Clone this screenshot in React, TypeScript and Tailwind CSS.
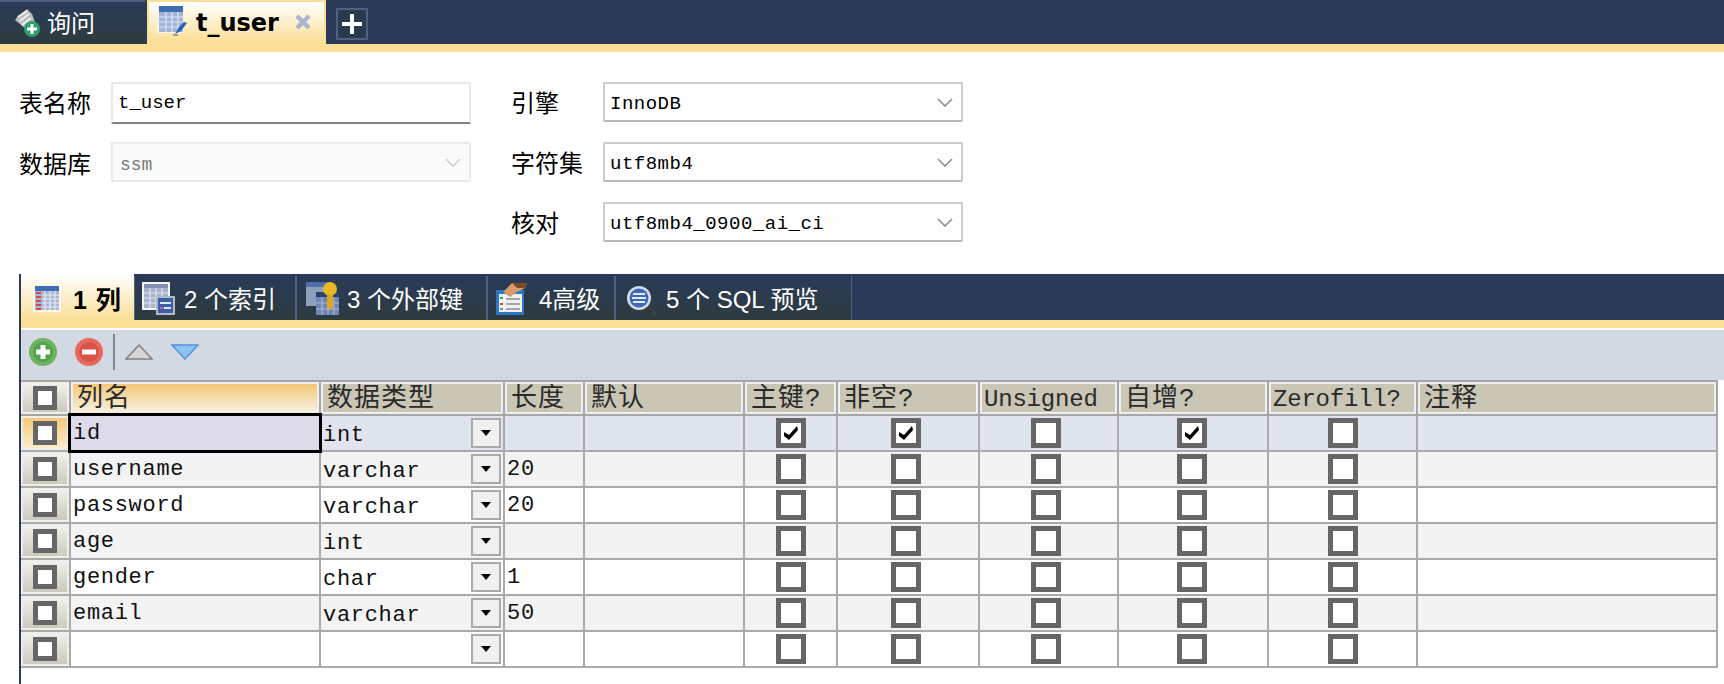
import React from "react";

const cjk = "font-['Liberation_Sans','Noto_Sans_CJK_SC',sans-serif]";
const mono = "font-['Liberation_Mono','Noto_Sans_CJK_SC',monospace]";
const cols = "grid grid-cols-[50px_250px_184px_80px_160px_93px_142px_139px_150px_149px_300px] w-[1697px]";

// small icons, drawn by hand
function QueryIcon() {
  return (
    <svg width="28" height="30" viewBox="0 0 28 30" className="shrink-0">
      <path d="M5 8 L14 1 L19 6 L22 14 L14 22 L8 17 L2 12 Z" fill="#b9bcbc" />
      <path d="M5 9 L14 3 M7 13 L16 6 M9 17 L18 10" stroke="#efefef" strokeWidth="2" />
      <circle cx="19" cy="21" r="8" fill="#2f9e6c" />
      <path d="M19 16 V26 M14 21 H24" stroke="#ffffff" strokeWidth="3" />
    </svg>
  );
}

function TableEditIcon() {
  return (
    <svg width="32" height="32" viewBox="0 0 32 32" className="shrink-0">
      <rect x="0" y="0" width="27" height="27" fill="#f8f5e8" />
      <rect x="2" y="0" width="24" height="6" fill="#3f6db3" />
      <rect x="2" y="6" width="24" height="20" fill="#a3b5d8" />
      <path d="M9 6 V26 M15 6 V26 M21 6 V26 M2 11 H26 M2 16 H26 M2 21 H26" stroke="#dfe5f0" strokeWidth="1.2" />
      <path d="M18 28 L22 21 L27 16 L30 17 L24 25 L18 28 Z" fill="#2c62b0" />
      <rect x="16" y="28" width="5" height="2" fill="#a0a0a0" />
    </svg>
  );
}

function ColumnsIcon() {
  return (
    <svg width="28" height="27" viewBox="0 0 28 27" className="shrink-0">
      <rect width="28" height="27" fill="#fdf8ea" />
      <rect x="2" y="1" width="24" height="5" fill="#3f6db3" />
      <rect x="2" y="6" width="24" height="19" fill="#a9b5d2" />
      <path d="M3 8 H8 M3 12 H8 M3 16 H8 M3 20 H8 M3 24 H8" stroke="#d8453f" strokeWidth="2" />
      <path d="M12 6 V25 M17 6 V25 M22 6 V25 M9 10 H26 M9 14 H26 M9 18 H26 M9 22 H26" stroke="#e8ebf3" strokeWidth="1.2" />
    </svg>
  );
}

function IndexIcon() {
  return (
    <svg width="33" height="33" viewBox="0 0 33 33" className="shrink-0">
      <rect width="28" height="28" fill="#f4f5f7" />
      <rect x="2" y="2" width="24" height="24" fill="#a8b4cc" />
      <rect x="2" y="2" width="24" height="4" fill="#8091b5" />
      <path d="M8 6 V26 M14 6 V26 M20 6 V26 M2 11 H26 M2 16 H26 M2 21 H26" stroke="#dfe4ee" strokeWidth="1.2" />
      <rect x="14" y="14" width="19" height="19" fill="#b4bac4" />
      <rect x="16" y="16" width="15" height="15" fill="#3b5fa8" />
      <rect x="18" y="20" width="11" height="2" fill="#dfe6f5" />
      <rect x="18" y="25" width="3" height="2" fill="#e06080" />
      <rect x="22" y="25" width="7" height="2" fill="#dfe6f5" />
    </svg>
  );
}

function ForeignKeyIcon() {
  return (
    <svg width="33" height="33" viewBox="0 0 33 33" className="shrink-0">
      <rect x="0" y="0" width="24" height="24" fill="#8f9fbe" />
      <rect x="0" y="0" width="24" height="5" fill="#4f6ea8" />
      <rect x="10" y="10" width="23" height="23" fill="#6f86b2" />
      <rect x="10" y="10" width="23" height="5" fill="#24416f" />
      <path d="M16 15 V33 M22 15 V33 M28 15 V33 M10 21 H33 M10 27 H33" stroke="#a6b5d2" strokeWidth="1.2" />
      <circle cx="24" cy="7" r="7" fill="#e9b828" />
      <path d="M21 12 H27 V25 L24 28 L21 25 Z" fill="#dca81e" />
    </svg>
  );
}

function AdvancedIcon() {
  return (
    <svg width="32" height="33" viewBox="0 0 32 33" className="shrink-0">
      <rect x="1" y="8" width="28" height="25" fill="#2c78c4" />
      <rect x="4" y="12" width="23" height="18" fill="#eef1ee" />
      <path d="M5 16 H8" stroke="#2fa84f" strokeWidth="2" />
      <path d="M5 22 H8" stroke="#d0483f" strokeWidth="2" />
      <path d="M5 27 H8" stroke="#7a8aa0" strokeWidth="2" />
      <path d="M11 17 H25 M11 22 H25 M11 27 H25" stroke="#a4a8ac" strokeWidth="2" />
      <path d="M8 10 L17 1 H32 L30 6 L22 10 L15 15 Z" fill="#d89a6a" />
      <path d="M17 1 H32 L30 6 H22 Z" fill="#7d4a28" />
    </svg>
  );
}

function PreviewIcon() {
  return (
    <svg width="32" height="32" viewBox="0 0 32 32" className="shrink-0 mt-[6px]">
      <path d="M20 20 L30 30" stroke="#3a3f44" strokeWidth="3" />
      <circle cx="13" cy="13" r="12" fill="#d8dce6" />
      <circle cx="13" cy="13" r="9.5" fill="#3f69b4" />
      <path d="M7 9 H19 M6 13 H20 M7 17 H19" stroke="#dfe8f8" strokeWidth="2" />
    </svg>
  );
}

function Chevron({ className }: { className: string }) {
  return (
    <svg width="16" height="9" viewBox="0 0 16 9" fill="none" className={className}>
      <path d="M1 1 L8 8 L15 1" stroke="currentColor" strokeWidth="1.5" />
    </svg>
  );
}

function Box({ checked = false, small = false }: { checked?: boolean; small?: boolean }) {
  return (
    <div className={`bg-white border-[5px] border-[#666666] flex items-center justify-center ${small ? "w-[24px] h-[24px]" : "w-[30px] h-[30px]"}`}>
      {checked && (
        <svg width="16" height="14" viewBox="0 0 16 14">
          <path d="M1 6 L6 9 L14 0 L15 4 L6 14 L1 10 Z" fill="#000000" />
        </svg>
      )}
    </div>
  );
}

const headers = [
  { text: "列名", wide: true },
  { text: "数据类型", wide: true },
  { text: "长度", wide: true },
  { text: "默认", wide: true },
  { text: "主键?", wide: true },
  { text: "非空?", wide: true },
  { text: "Unsigned", wide: false },
  { text: "自增?", wide: true },
  { text: "Zerofill?", wide: false },
  { text: "注释", wide: true },
];

const rows = [
  { name: "id", type: "int", len: "", pk: true, nn: true, ai: true },
  { name: "username", type: "varchar", len: "20" },
  { name: "password", type: "varchar", len: "20" },
  { name: "age", type: "int", len: "" },
  { name: "gender", type: "char", len: "1" },
  { name: "email", type: "varchar", len: "50" },
  { name: "", type: "", len: "" },
] as { name: string; type: string; len: string; pk?: boolean; nn?: boolean; ai?: boolean }[];

const innerTabs = [
  { label: "2 个索引", w: "w-[162px]", gap: "gap-[9px] pl-[7px]", icon: <IndexIcon /> },
  { label: "3 个外部键", w: "w-[191px]", gap: "gap-[8px] pl-[9px]", icon: <ForeignKeyIcon /> },
  { label: "4高级", w: "w-[128px]", gap: "gap-[12px] pl-[7px]", icon: <AdvancedIcon /> },
  { label: "5 个 SQL 预览", w: "w-[237px]", gap: "gap-[8px] pl-[10px]", icon: <PreviewIcon /> },
];

function FormSelect({ value }: { value: string }) {
  return (
    <div className="w-[360px] h-[40px] rounded-[2px] border-2 border-[#cccccc] border-b-[#b8b8b8] bg-[#fefefe] flex items-center justify-between pl-[5px] pr-[8px]">
      <span className={`${mono} text-[19px] tracking-[0.5px] text-black pt-[4px]`}>{value}</span>
      <Chevron className="text-[#888888]" />
    </div>
  );
}

export default function App() {
  return (
    <div className="w-[1724px] h-[684px] bg-white overflow-hidden flex flex-col">
      {/* main tab strip */}
      <div className="h-[44px] shrink-0 bg-[#2a3a58] flex items-stretch">
        <div className="w-[145px] border-t-2 border-[#50607f] bg-gradient-to-b from-[#2a3a58] to-[#2d3b3e] flex items-center pl-[13px] gap-[6px]">
          <QueryIcon />
          <span className={`${cjk} text-[24px] leading-none text-white pt-[2px]`}>询问</span>
        </div>
        <div className="ml-[2px] w-[179px] border-[2px] border-[#fcdf96] bg-gradient-to-b from-white to-[#fcdf96] flex items-center pl-[8px]">
          <TableEditIcon />
          <span className="font-['DejaVu_Sans',sans-serif] font-bold text-[24px] leading-none text-black ml-[7px] pt-[2px]">t_user</span>
          <svg width="16" height="16" viewBox="0 0 16 16" className="ml-[16px]">
            <path d="M2 2 L14 14 M14 2 L2 14" stroke="#a9b4cf" strokeWidth="4.5" />
          </svg>
        </div>
        <div className="ml-[10px] mt-[8px] w-[32px] h-[32px] border-2 border-[#50607f] bg-[#2b3b4c] flex items-center justify-center">
          <svg width="20" height="20" viewBox="0 0 20 20">
            <path d="M10 0 V20 M0 10 H20" stroke="#ffffff" strokeWidth="4" />
          </svg>
        </div>
      </div>
      <div className="h-[8px] shrink-0 bg-[#fcdf96]" />

      {/* table properties */}
      <div className="h-[222px] shrink-0 pt-[30px] pl-[19px] flex gap-[40px]">
        <div className="flex flex-col">
          <div className="flex items-center h-[42px]">
            <span className={`${cjk} w-[92px] text-[24px] text-black pt-[2px]`}>表名称</span>
            <div className="w-[360px] h-[42px] border-2 border-[#e8e8e8] border-b-[#808080] bg-white flex items-center pl-[5px]">
              <span className={`${mono} text-[19px] text-black`}>t_user</span>
            </div>
          </div>
          <div className="flex items-center h-[40px] mt-[18px]">
            <span className={`${cjk} w-[92px] text-[24px] text-black pt-[6px]`}>数据库</span>
            <div className="w-[360px] h-[40px] border-2 border-[#ebebeb] bg-[#fafafa] flex items-center justify-between pl-[7px] pr-[8px]">
              <span className={`${mono} text-[18px] text-[#777777] pt-[6px]`}>ssm</span>
              <Chevron className="text-[#cccccc]" />
            </div>
          </div>
        </div>
        <div className="flex flex-col gap-[20px]">
          {[
            ["引擎", "InnoDB"],
            ["字符集", "utf8mb4"],
            ["核对", "utf8mb4_0900_ai_ci"],
          ].map(([label, value]) => (
            <div key={label} className="flex items-center">
              <span className={`${cjk} w-[92px] text-[24px] text-black pt-[4px]`}>{label}</span>
              <FormSelect value={value} />
            </div>
          ))}
        </div>
      </div>

      {/* columns editor */}
      <div className="ml-[19px] flex-1 border-l-2 border-[#2a3a58] flex flex-col">
        <div className="h-[46px] shrink-0 bg-[#2a3a58] flex items-stretch">
          <div className="w-[113px] pt-[2px] bg-gradient-to-b from-white to-[#fcdf96] flex items-center pl-[12px] gap-[12px]">
            <ColumnsIcon />
            <span className={`${cjk} font-bold text-[25px] leading-none tracking-[1px] text-black whitespace-pre pt-[4px]`}>1 列</span>
          </div>
          {innerTabs.map((t) => (
            <div key={t.label} className={`${t.w} mt-[2px] border-x border-[#50607f] bg-gradient-to-b from-[#2a3a58] to-[#2d3b3e] flex items-center ${t.gap}`}>
              {t.icon}
              <span className={`${cjk} text-[24px] leading-none text-white whitespace-pre pt-[4px]`}>{t.label}</span>
            </div>
          ))}
        </div>
        <div className="h-[8px] shrink-0 bg-[#fcdf96]" />
        <div className="h-[2px] shrink-0 bg-white" />

        {/* toolbar */}
        <div className="h-[50px] shrink-0 bg-[#d2d9e3] flex items-center pl-[8px] pb-[6px]">
          <svg width="28" height="28" viewBox="0 0 28 28">
            <circle cx="14" cy="14" r="14" fill="#6fb35e" />
            <circle cx="14" cy="14" r="10" fill="#4fa548" />
            <path d="M14 7 V21 M7 14 H21" stroke="#ffffff" strokeWidth="5" />
          </svg>
          <svg width="28" height="28" viewBox="0 0 28 28" className="ml-[18px]">
            <circle cx="14" cy="14" r="14" fill="#e8685c" />
            <circle cx="14" cy="14" r="10" fill="#d9534a" />
            <path d="M7 14 H21" stroke="#ffffff" strokeWidth="5" />
          </svg>
          <div className="ml-[10px] w-[2px] h-[36px] bg-[#868686]" />
          <svg width="28" height="16" viewBox="0 0 28 16" className="ml-[10px]">
            <path d="M14 1 L27 15 H1 Z" fill="#d6d6d6" stroke="#808080" strokeWidth="1.5" />
          </svg>
          <svg width="28" height="16" viewBox="0 0 28 16" className="ml-[18px]">
            <path d="M1 1 H27 L14 15 Z" fill="#8fc4f2" stroke="#4f94d8" strokeWidth="1.5" />
          </svg>
        </div>

        {/* grid */}
        <div className={`${cols} border-t-2 border-[#a6a6a6]`}>
          <div className="h-[34px] border-b-2 border-r-2 border-[#a6a6a6]">
            <div className="h-full border-2 border-[#f0f0ec] bg-gradient-to-b from-[#f0f0ec] to-[#cccabc] flex items-center justify-center">
              <Box small />
            </div>
          </div>
          {headers.map((h, i) => (
            <div key={h.text} className="h-[34px] border-b-2 border-r-2 border-[#a6a6a6] bg-[#ededed]">
              <div className={`h-full border-2 border-[#efefef] flex items-center ${mono} leading-none text-[#2a2a2a] overflow-hidden whitespace-nowrap ${h.wide ? "text-[26px] tracking-[1px] pl-[4px] pt-[2px]" : "text-[24px] tracking-[-0.2px] pl-[2px] pt-[3px]"} ${i === 0 ? "bg-gradient-to-b from-[#f5c878] to-[#f5f0dc]" : "bg-[#c9c6b6]"}`}>
                {h.text}
              </div>
            </div>
          ))}
        </div>
        {rows.map((r, idx) => {
          const selected = idx === 0;
          const bg = selected ? "bg-[#e0e4ee]" : idx % 2 === 1 ? "bg-[#f3f3f3]" : "bg-white";
          const cell = `h-[36px] border-b-2 border-r-2 border-[#aaaaaa] ${bg}`;
          return (
            <div key={idx} className={cols}>
              <div className="h-[36px] border-b-2 border-r-2 border-[#aaaaaa]">
                <div className={`h-full border-2 border-[#eeeeea] bg-gradient-to-b flex items-center justify-center ${selected ? "from-[#f5c878] to-[#fbeecc]" : "from-[#f0f0ec] to-[#cccabc]"}`}>
                  <Box small />
                </div>
              </div>
              <div className={`${cell} relative`}>
                <div className={`h-full flex items-start pl-[2px] pt-[4px] ${mono} text-[22px] leading-[28px] tracking-[0.7px] text-[#111111] ${selected ? "bg-[#dddbe9] relative z-10 outline-[3px] outline-black" : ""}`}>
                  {r.name}
                </div>
              </div>
              <div className={`${cell} flex items-center justify-between pl-[2px] pr-[2px]`}>
                <span className={`${mono} text-[22px] leading-none tracking-[0.7px] text-[#111111] mt-[5px]`}>{r.type}</span>
                <div className="w-[30px] h-[30px] border-2 border-[#aaaaaa] bg-[#f0f0f0] flex items-center justify-center">
                  <div className="w-0 h-0 border-x-[5px] border-x-transparent border-t-[6px] border-t-black" />
                </div>
              </div>
              <div className={`${cell} pl-[2px] pt-[4px] ${mono} text-[22px] leading-[28px] tracking-[0.7px] text-[#111111]`}>{r.len}</div>
              <div className={cell} />
              <div className={`${cell} flex items-center justify-center`}><Box checked={r.pk} /></div>
              <div className={`${cell} flex items-center justify-center pr-[4px]`}><Box checked={r.nn} /></div>
              <div className={`${cell} flex items-center justify-center pr-[5px]`}><Box /></div>
              <div className={`${cell} flex items-center justify-center pr-[2px]`}><Box checked={r.ai} /></div>
              <div className={`${cell} flex items-center justify-center`}><Box /></div>
              <div className={cell} />
            </div>
          );
        })}
      </div>
    </div>
  );
}
